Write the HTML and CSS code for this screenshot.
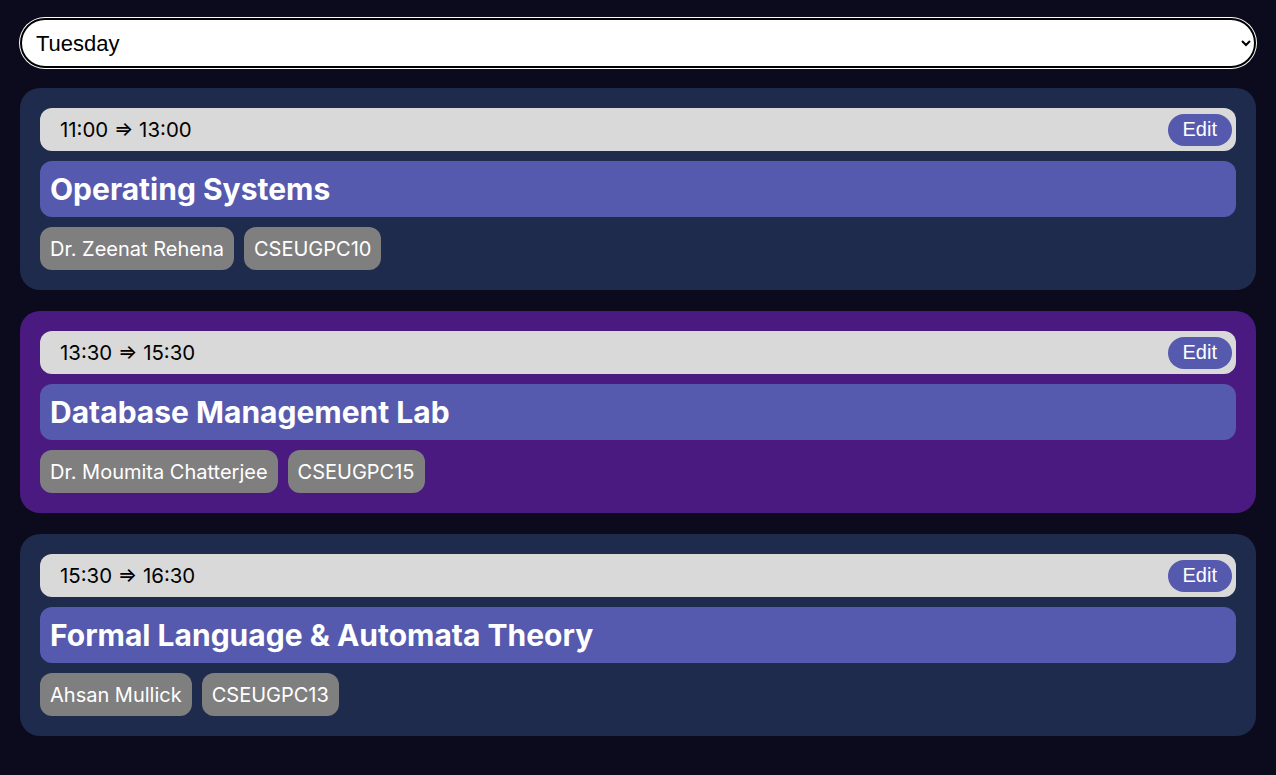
FILE: index.html
```html
<!DOCTYPE html>
<html>
<head>
<meta charset="utf-8">
<link rel="stylesheet" href="styles.css">
</head>
<body>
<div class="page">
  <select class="day-select">
    <option>Monday</option>
    <option selected>Tuesday</option>
    <option>Wednesday</option>
    <option>Thursday</option>
    <option>Friday</option>
  </select>

  <div class="card card-blue">
    <div class="time-bar">
      <span class="time">11:00 ⇒ 13:00</span>
      <button class="edit">Edit</button>
    </div>
    <div class="title">Operating Systems</div>
    <div class="tags">
      <span class="tag">Dr. Zeenat Rehena</span>
      <span class="tag">CSEUGPC10</span>
    </div>
  </div>

  <div class="card card-purple">
    <div class="time-bar">
      <span class="time">13:30 ⇒ 15:30</span>
      <button class="edit">Edit</button>
    </div>
    <div class="title">Database Management Lab</div>
    <div class="tags">
      <span class="tag">Dr. Moumita Chatterjee</span>
      <span class="tag">CSEUGPC15</span>
    </div>
  </div>

  <div class="card card-blue">
    <div class="time-bar">
      <span class="time">15:30 ⇒ 16:30</span>
      <button class="edit">Edit</button>
    </div>
    <div class="title">Formal Language &amp; Automata Theory</div>
    <div class="tags">
      <span class="tag">Ahsan Mullick</span>
      <span class="tag">CSEUGPC13</span>
    </div>
  </div>
</div>
</body>
</html>
```

FILE: styles.css
```css
* { box-sizing: border-box; }
html, body { margin: 0; padding: 0; }
body {
  background: #0c0a1d;
  font-family: Inter, "Noto Sans", sans-serif;
}
.page {
  display: flex;
  flex-direction: column;
  gap: 21px;
  padding: 18px 20px;
}
.day-select {
  width: 100%;
  height: 50px;
  border-radius: 25px;
  border: 2px solid #000;
  box-shadow: 0 0 0 1px #fff;
  background: #fff;
  font-family: "Liberation Sans", Arial, sans-serif;
  font-size: 22px;
  color: #000;
  padding: 0 10px 0 10px;
  margin-bottom: -1px;
}
.card {
  border-radius: 20px;
  padding: 20px;
  display: flex;
  flex-direction: column;
  gap: 10px;
}
.card-blue { background: #1e2b4d; }
.card-purple { background: #4b1a80; }
.time-bar {
  background: #d9d9d9;
  border-radius: 12px;
  display: flex;
  align-items: center;
  justify-content: space-between;
  padding: 0 4px 0 20px;
  height: 43px;
}
.time {
  font-size: 20.4px;
  color: #000;
}
.edit {
  background: #565aae;
  color: #fff;
  border: none;
  border-radius: 16px;
  height: 32px;
  padding: 0 15px;
  font-family: "Liberation Sans", Arial, sans-serif;
  font-size: 20px;
}
.title {
  background: #565aae;
  color: #fff;
  border-radius: 12px;
  font-size: 30px;
  font-weight: 700;
  height: 56px;
  display: flex;
  align-items: center;
  padding: 0 10px;
}
.tags {
  display: flex;
  gap: 10px;
}
.tag {
  background: #7f7f7f;
  color: #fff;
  border-radius: 12px;
  font-size: 20px;
  padding: 0 10px;
  height: 43px;
  display: flex;
  align-items: center;
}
```
